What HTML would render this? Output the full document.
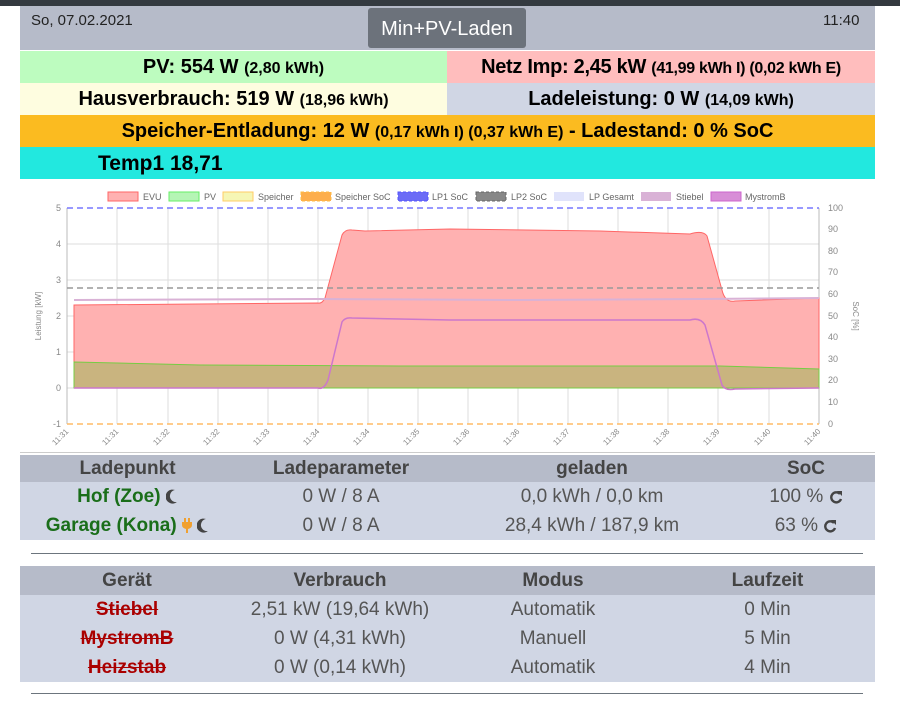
<!DOCTYPE html>
<html><head><meta charset="utf-8"><style>
body{margin:0;width:900px;height:701px;background:#fff;font-family:"Liberation Sans",sans-serif;position:relative;overflow:hidden;color:#212529}
.top{position:absolute;left:0;top:0;width:900px;height:6px;background:#343a40}
.hd{position:absolute;left:20px;top:6px;width:855px;height:44px;background:#b6bbc9}
.row{position:absolute;height:32px;line-height:33px;text-align:center;font-weight:bold;font-size:20px;color:#000}
.row small{font-size:16px}
table{position:absolute;left:20px;width:855px;border-collapse:collapse;font-size:19px}
th,td{padding:0}
th{background:#b6bbc9;color:#444;height:27px;font-weight:bold}
td{background:#d0d6e4;color:#555;text-align:center;height:29px}
.g{color:#1a6e1a;font-weight:bold}
.r{color:#a00;font-weight:bold;text-decoration:line-through}
hr{position:absolute;left:31px;width:832px;border:0;border-top:1px solid #6c757d;margin:0}
svg.i{vertical-align:-2px}
</style></head><body>
<div class="top"></div>
<div class="hd"></div>
<div style="position:absolute;left:31px;top:12px;font-size:15px;color:#222">So, 07.02.2021</div>
<div style="position:absolute;left:823px;top:12px;font-size:15px;color:#222">11:40</div>
<div style="position:absolute;left:368px;top:8px;width:158px;height:40px;background:#6c727b;border-radius:3px;color:#fff;font-size:20px;line-height:42px;text-align:center">Min+PV-Laden</div>
<div class="row" style="left:20px;top:51px;width:427px;background:#bdfcbf">PV: 554 W <small>(2,80 kWh)</small></div>
<div class="row" style="left:447px;top:51px;width:428px;background:#ffbdbd;letter-spacing:-0.3px">Netz Imp: 2,45 kW <small>(41,99 kWh I) (0,02 kWh E)</small></div>
<div class="row" style="left:20px;top:83px;width:427px;background:#fefde0">Hausverbrauch: 519 W <small>(18,96 kWh)</small></div>
<div class="row" style="left:447px;top:83px;width:428px;background:#d0d6e4">Ladeleistung: 0 W <small>(14,09 kWh)</small></div>
<div class="row" style="left:20px;top:115px;width:855px;background:#fbbb20">Speicher-Entladung: 12 W <small>(0,17 kWh I) (0,37 kWh E)</small> - Ladestand: 0 % SoC</div>
<div class="row" style="left:20px;top:147px;width:855px;background:#22e8df;text-align:left;font-size:21px"><span style="margin-left:78px">Temp1 18,71</span></div>

<svg style="position:absolute;left:0;top:185px" width="900" height="270" font-family="Liberation Sans,sans-serif" font-size="9" fill="#888">
<g transform="translate(0,-185)">
<g font-size="9" fill="#666">
<rect x="108" y="192" width="30" height="9" fill="#ffb1b1" stroke="#f66"/><text x="143" y="200">EVU</text>
<rect x="169" y="192" width="30" height="9" fill="#b5f5b5" stroke="#6e6"/><text x="204" y="200">PV</text>
<rect x="223" y="192" width="30" height="9" fill="#f6f6b5" stroke="#fc6"/><text x="258" y="200">Speicher</text>
<rect x="301" y="192" width="30" height="9" fill="#fdae4d" stroke="#fb4" stroke-dasharray="3,2"/><text x="335" y="200">Speicher SoC</text>
<rect x="398" y="192" width="30" height="9" fill="#6c6cf6" stroke="#55f" stroke-dasharray="3,2"/><text x="432" y="200">LP1 SoC</text>
<rect x="476" y="192" width="30" height="9" fill="#888" stroke="#666" stroke-dasharray="3,2"/><text x="511" y="200">LP2 SoC</text>
<rect x="554" y="192" width="30" height="9" fill="#e0e3fb"/><text x="589" y="200">LP Gesamt</text>
<rect x="641" y="192" width="30" height="9" fill="#d9b2d6"/><text x="676" y="200">Stiebel</text>
<rect x="711" y="192" width="30" height="9" fill="#d88ed7" stroke="#c6c"/><text x="745" y="200">MystromB</text>
</g>
<g stroke="#ddd" stroke-width="1">
<line x1="67" y1="244" x2="819" y2="244"/><line x1="67" y1="280" x2="819" y2="280"/><line x1="67" y1="316" x2="819" y2="316"/><line x1="67" y1="352" x2="819" y2="352"/><line x1="67" y1="388" x2="819" y2="388"/>
<line x1="117" y1="208" x2="117" y2="424"/><line x1="168" y1="208" x2="168" y2="424"/><line x1="218" y1="208" x2="218" y2="424"/><line x1="268" y1="208" x2="268" y2="424"/><line x1="318" y1="208" x2="318" y2="424"/><line x1="368" y1="208" x2="368" y2="424"/><line x1="418" y1="208" x2="418" y2="424"/><line x1="468" y1="208" x2="468" y2="424"/><line x1="518" y1="208" x2="518" y2="424"/><line x1="568" y1="208" x2="568" y2="424"/><line x1="618" y1="208" x2="618" y2="424"/><line x1="668" y1="208" x2="668" y2="424"/><line x1="718" y1="208" x2="718" y2="424"/><line x1="769" y1="208" x2="769" y2="424"/>
</g>
<line x1="67" y1="208" x2="67" y2="424" stroke="#bbb"/><line x1="819" y1="208" x2="819" y2="424" stroke="#bbb"/>
<path d="M74,305 L318,303 Q322,304 325,298 L342,235 Q345,229 352,230 L365,231 L450,229 L600,231 L690,234 Q703,230 707,236 L722,290 Q725,303 735,301 L819,298 L819,388 L74,388 Z" fill="#ffb1b1" stroke="#f66" stroke-width="1"/>
<path d="M74,362 L200,365 L400,366 L600,366 L720,366 L819,369 L819,388 L74,388 Z" fill="#c9b47f" stroke="#7c4" stroke-width="1"/>
<path d="M74,300 L318,299 L520,300 L700,299 L819,298" stroke="#d9b2d6" stroke-width="2" fill="none"/>
<path d="M74,388 L318,388 Q324,390 328,380 L342,322 Q345,317 352,318 L450,320 L650,320 L690,320 Q700,317 705,325 L722,385 Q725,391 735,389 L819,388" stroke="#c7c" stroke-width="1.5" fill="none"/>
<line x1="67" y1="288" x2="819" y2="288" stroke="#999" stroke-width="1.5" stroke-dasharray="6,4"/>
<line x1="67" y1="208" x2="819" y2="208" stroke="#77f" stroke-width="1.5" stroke-dasharray="6,4"/>
<line x1="67" y1="424" x2="819" y2="424" stroke="#fb6" stroke-width="1.5" stroke-dasharray="6,4"/>
<g text-anchor="end"><text x="61" y="211">5</text><text x="61" y="247">4</text><text x="61" y="283">3</text><text x="61" y="319">2</text><text x="61" y="355">1</text><text x="61" y="391">0</text><text x="61" y="427">-1</text></g>
<g><text x="828" y="211">100</text><text x="828" y="232">90</text><text x="828" y="254">80</text><text x="828" y="275">70</text><text x="828" y="297">60</text><text x="828" y="319">50</text><text x="828" y="340">40</text><text x="828" y="362">30</text><text x="828" y="383">20</text><text x="828" y="405">10</text><text x="828" y="427">0</text></g>
<text transform="translate(41,316) rotate(-90)" text-anchor="middle" font-size="8">Leistung [kW]</text>
<text transform="translate(853,316) rotate(90)" text-anchor="middle" font-size="8">SoC [%]</text>
<g font-size="8" text-anchor="end">
<text transform="translate(69,432) rotate(-45)">11:31</text><text transform="translate(119,432) rotate(-45)">11:31</text><text transform="translate(170,432) rotate(-45)">11:32</text><text transform="translate(220,432) rotate(-45)">11:32</text><text transform="translate(270,432) rotate(-45)">11:33</text><text transform="translate(320,432) rotate(-45)">11:34</text><text transform="translate(370,432) rotate(-45)">11:34</text><text transform="translate(420,432) rotate(-45)">11:35</text><text transform="translate(470,432) rotate(-45)">11:36</text><text transform="translate(520,432) rotate(-45)">11:36</text><text transform="translate(570,432) rotate(-45)">11:37</text><text transform="translate(620,432) rotate(-45)">11:38</text><text transform="translate(670,432) rotate(-45)">11:38</text><text transform="translate(720,432) rotate(-45)">11:39</text><text transform="translate(771,432) rotate(-45)">11:40</text><text transform="translate(821,432) rotate(-45)">11:40</text>
</g>
</g>
</svg>
<div style="position:absolute;left:20px;top:452px;width:855px;border-top:1px solid #ccc"></div>

<table style="top:455px">
<tr><th style="width:215px">Ladepunkt</th><th style="width:212px">Ladeparameter</th><th style="width:290px">geladen</th><th>SoC</th></tr>
<tr><td><span class="g">Hof (Zoe)</span> <svg class="i" width="12" height="15" viewBox="0 0 12 15"><path d="M9,1 A7,7 0 1 0 11,13 A6,6 0 0 1 9,1 Z" fill="#444"/></svg></td><td>0 W / 8 A</td><td>0,0 kWh / 0,0 km</td><td>100 % <svg class="i" width="14" height="14" viewBox="0 0 14 14"><path d="M11,4 A5,5 0 1 0 12,9" stroke="#444" stroke-width="2.4" fill="none"/><path d="M8,1 L13,1 L13,6 Z" fill="#444"/></svg></td></tr>
<tr><td><span class="g">Garage (Kona)</span> <svg class="i" width="10" height="15" viewBox="0 0 10 15"><rect x="2" y="0" width="2" height="4" fill="#f0a030"/><rect x="6" y="0" width="2" height="4" fill="#f0a030"/><path d="M0,4 H10 V7 Q10,10 6,11 V15 H4 V11 Q0,10 0,7 Z" fill="#f0a030"/></svg> <svg class="i" width="12" height="15" viewBox="0 0 12 15"><path d="M9,1 A7,7 0 1 0 11,13 A6,6 0 0 1 9,1 Z" fill="#444"/></svg></td><td>0 W / 8 A</td><td>28,4 kWh / 187,9 km</td><td>63 % <svg class="i" width="14" height="14" viewBox="0 0 14 14"><path d="M11,4 A5,5 0 1 0 12,9" stroke="#444" stroke-width="2.4" fill="none"/><path d="M8,1 L13,1 L13,6 Z" fill="#444"/></svg></td></tr>
</table>
<hr style="top:553px">
<table style="top:566px">
<tr><th style="width:214px;height:29px">Gerät</th><th style="width:212px">Verbrauch</th><th style="width:214px">Modus</th><th>Laufzeit</th></tr>
<tr><td><span class="r">Stiebel</span></td><td>2,51 kW (19,64 kWh)</td><td>Automatik</td><td>0 Min</td></tr>
<tr><td><span class="r">MystromB</span></td><td>0 W (4,31 kWh)</td><td>Manuell</td><td>5 Min</td></tr>
<tr><td><span class="r">Heizstab</span></td><td>0 W (0,14 kWh)</td><td>Automatik</td><td>4 Min</td></tr>
</table>
<hr style="top:693px">
</body></html>
